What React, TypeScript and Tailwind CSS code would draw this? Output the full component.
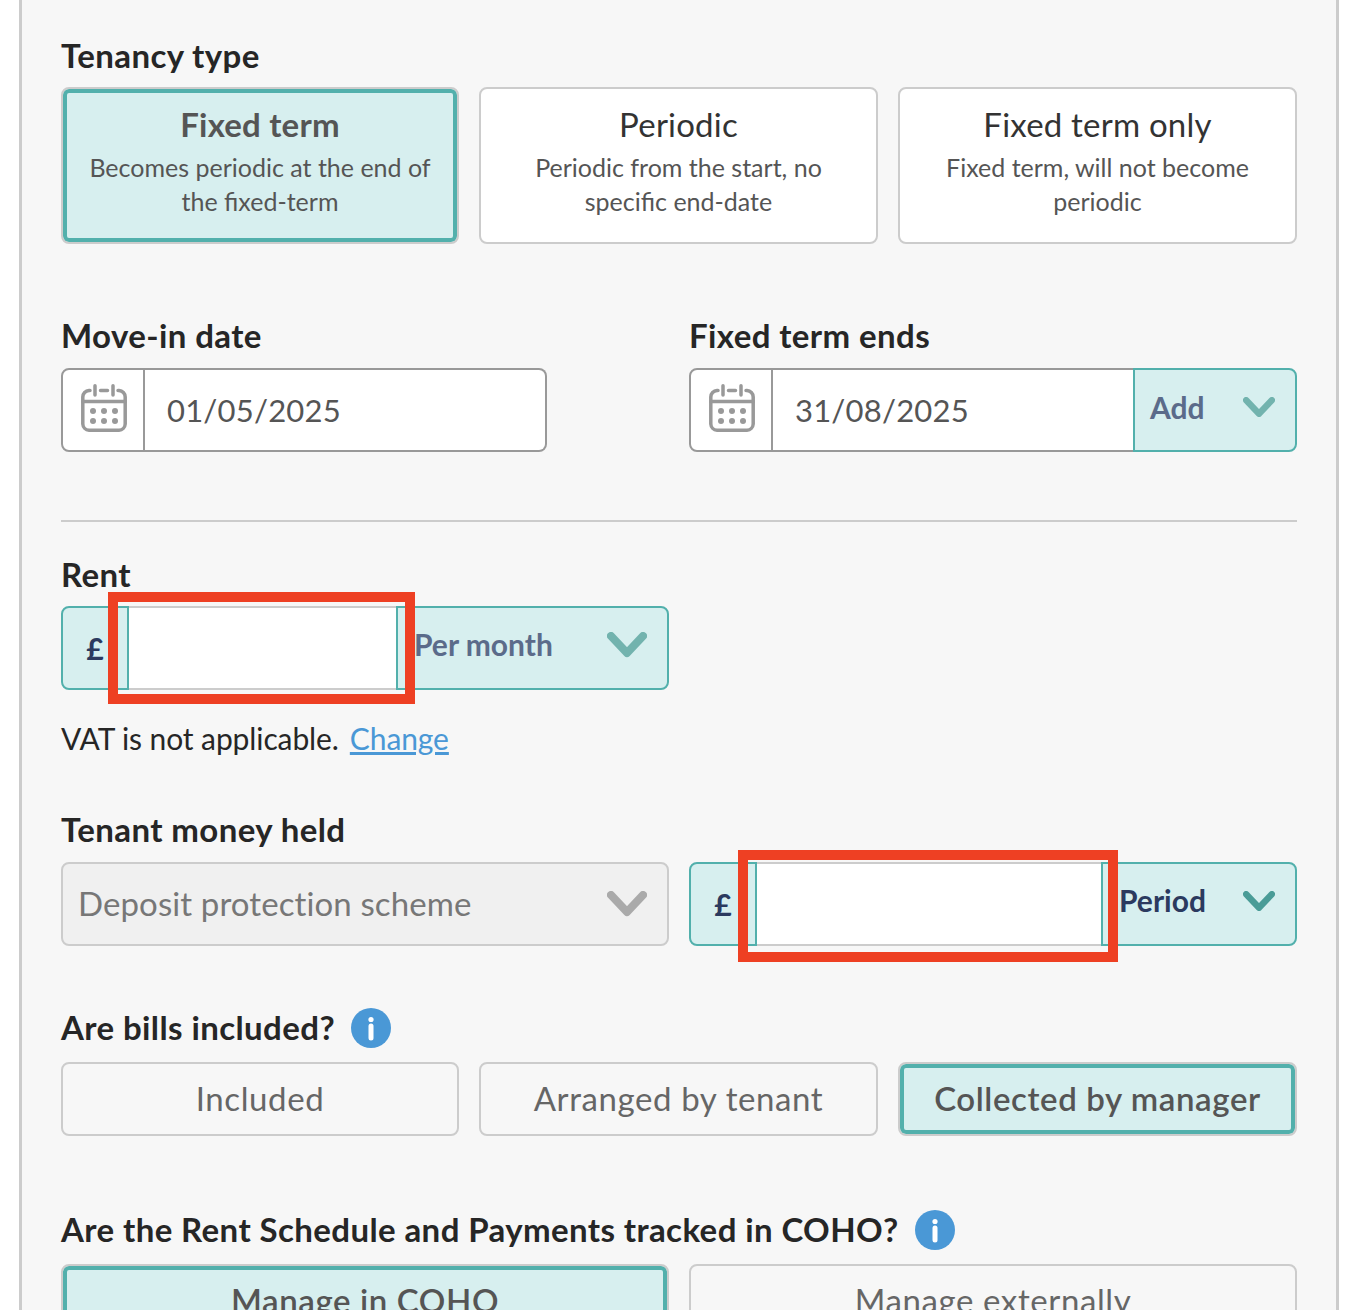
import { ReactNode } from "react";

const tenancyTypes = [
  { title: "Fixed term", des: ["Becomes periodic at the end of", "the fixed-term"], active: true },
  { title: "Periodic", des: ["Periodic from the start, no", "specific end-date"], active: false },
  { title: "Fixed term only", des: ["Fixed term, will not become", "periodic"], active: false },
];

const Label = ({ children, className }: { children: ReactNode; className: string }) => (
  <div className={`flex h-10 items-center pb-0.5 text-[33px] font-bold tracking-[0.4px] text-[#262626] ${className}`}>{children}</div>
);

const InfoIcon = ({ className }: { className: string }) => (
  <svg viewBox="0 0 40 40" className={`h-10 w-10 shrink-0 ${className}`}>
    <circle cx="20" cy="20" r="20" fill="#4a98d6" />
    <circle cx="20" cy="11.5" r="2.6" fill="#fff" />
    <path d="M20 18v12" stroke="#fff" strokeWidth="5" strokeLinecap="round" />
  </svg>
);

const Chevron = ({ color, width, className }: { color: string; width: number; className: string }) => (
  <svg viewBox="0 0 40 26" width={width} height={(width * 26) / 40} className={className}>
    <path d="M4 4l16 17L36 4" fill="none" stroke={color} strokeWidth="8" strokeLinecap="round" strokeLinejoin="round" />
  </svg>
);

const CalendarIcon = () => (
  <svg viewBox="0 0 46 48" className="mb-1 ml-0.5 h-12 w-[46px]" fill="none" stroke="#999" strokeWidth="3.5" strokeLinecap="round">
    <path d="M9 6.5H8A6.5 6.5 0 0 0 1.8 13v27A6.5 6.5 0 0 0 8 46.2h30a6.5 6.5 0 0 0 6.2-6.2V13A6.5 6.5 0 0 0 38 6.5h-1" />
    <path d="M14 1.8V11M32 1.8V11M19.5 6.5h7M1.8 17.5h42.4" />
    <g fill="#999" stroke="none">
      <circle cx="12" cy="27" r="3" />
      <circle cx="23" cy="27" r="3" />
      <circle cx="34" cy="27" r="3" />
      <circle cx="12" cy="37" r="3" />
      <circle cx="23" cy="37" r="3" />
      <circle cx="34" cy="37" r="3" />
    </g>
  </svg>
);

const DateField = ({ value, children, className }: { value: string; children?: ReactNode; className: string }) => (
  <div className={`flex h-[84px] ${className}`}>
    <div className="flex w-[84px] shrink-0 items-center justify-center rounded-l-lg border-2 border-[#999] bg-white">
      <CalendarIcon />
    </div>
    <div
      className={
        children
          ? "flex flex-1 items-center border-y-2 border-[#999] bg-white pl-[22px] text-[31px] tracking-[0.2px] text-[#555]"
          : "flex flex-1 items-center rounded-r-lg border-y-2 border-r-2 border-[#999] bg-white pl-[22px] text-[31px] tracking-[0.2px] text-[#555]"
      }
    >
      {value}
    </div>
    {children}
  </div>
);

const Toggle = ({ label, active }: { label: string; active?: boolean }) => (
  <div
    className={
      active
        ? "flex h-full items-center justify-center rounded-lg border-2 border-[#ccc] bg-[#d7efef] text-[33px] font-semibold tracking-[0.6px] text-[#555] shadow-[inset_0_0_0_4px_#52b0ac]"
        : "flex h-full items-center justify-center rounded-lg border-2 border-[#ccc] text-[33px] tracking-[0.6px] text-[#666]"
    }
  >
    {label}
  </div>
);

const MoneyField = ({ unit, unitColor, chevronColor, chevronWidth, inputWidth, className }: {
  unit: string;
  unitColor: string;
  chevronColor: string;
  chevronWidth: number;
  inputWidth: string;
  className: string;
}) => (
  <div className={`flex h-[84px] ${className}`}>
    <div className="flex w-[68px] shrink-0 items-center justify-center rounded-l-lg border-2 border-[#52b0ac] bg-[#d7efef] text-[30px] font-bold text-[#2b3a5f]">£</div>
    <div className={`shrink-0 border-y-2 border-[#ccc] bg-white ${inputWidth}`} />
    <div className={`flex flex-1 items-center justify-between rounded-r-lg border-2 border-[#52b0ac] bg-[#d7efef] pr-5 pl-4 text-[30px] font-bold ${unitColor}`}>
      <span className="pb-[7px]">{unit}</span>
      <Chevron color={chevronColor} width={chevronWidth} className="mb-[6px]" />
    </div>
  </div>
);

const App = () => {
  return (
    <div className="relative h-[1310px] overflow-hidden bg-white font-['Lato',sans-serif]">
      <div className="ml-[19px] h-full w-[1320px] border-x-[3px] border-[#ccc] bg-[#f7f7f7] px-[39px] pt-[37px]">
        <Label className="mb-[10px]">Tenancy type</Label>
        <div className="grid h-[157px] grid-cols-[398px_399px_399px] gap-5">
          {tenancyTypes.map((item) => (
            <div
              key={item.title}
              className={
                item.active
                  ? "flex flex-col items-center rounded-lg border-2 border-[#ccc] bg-[#d7efef] pt-[15px] text-[#555] shadow-[inset_0_0_0_4px_#52b0ac]"
                  : "flex flex-col items-center rounded-lg border-2 border-[#ccc] bg-white pt-[15px] text-[#333]"
              }
            >
              <p className={item.active ? "text-[33px] leading-10 font-bold tracking-[0.2px]" : "text-[33px] leading-10 tracking-[0.2px]"}>{item.title}</p>
              <div className="mt-[6px] text-[25px] leading-[34px] text-[#555]">
                {item.des.map((line) => (
                  <p key={line} className="text-center">{line}</p>
                ))}
              </div>
            </div>
          ))}
        </div>

        <div className="mt-[73px] grid grid-cols-2 gap-5">
          <div>
            <Label className="mb-[11px]">Move-in date</Label>
            <DateField value="01/05/2025" className="w-[486px]" />
          </div>
          <div>
            <Label className="mb-[11px]">Fixed term ends</Label>
            <DateField value="31/08/2025" className="">
              <div className="flex w-[164px] shrink-0 items-center justify-between rounded-r-lg border-2 border-[#52b0ac] bg-[#d7efef] pr-5 pl-[15px] text-[30px] font-bold text-[#5b6b8a]">
                <span className="pb-[6px]">Add</span>
                <Chevron color="#72b3ae" width={32} className="mb-[6px]" />
              </div>
            </DateField>
          </div>
        </div>

        <div className="mt-[68px] h-0.5 bg-[#ccc]" />

        <Label className="mt-[34px] mb-[10px]">Rent</Label>
        <MoneyField unit="Per month" unitColor="text-[#5b6b8a]" chevronColor="#72b3ae" chevronWidth={40} inputWidth="w-[267px]" className="w-[608px]" />

        <p className="mt-[28px] flex h-10 items-center text-[30px] tracking-[-0.1px] text-[#262626]">
          VAT is not applicable.
          <span className="ml-[11px] text-[#4a98d6] underline underline-offset-2">Change</span>
        </p>

        <Label className="mt-[53px] mb-[11px]">Tenant money held</Label>
        <div className="grid grid-cols-2 gap-5">
          <div className="flex h-[84px] items-center justify-between rounded-lg border-2 border-[#ccc] bg-[#f0f0f0] pr-5 pl-[15px] text-[33px] tracking-[0.1px] text-[#777]">
            Deposit protection scheme
            <Chevron color="#aaa" width={40} className="" />
          </div>
          <MoneyField unit="Period" unitColor="text-[#2b3a5f]" chevronColor="#4a9c97" chevronWidth={32} inputWidth="w-[344px]" className="" />
        </div>

        <Label className="mt-[63px] mb-[13px]">
          Are bills included?
          <InfoIcon className="ml-4" />
        </Label>
        <div className="grid h-[74px] grid-cols-[398px_399px_399px] gap-5">
          <Toggle label="Included" />
          <Toggle label="Arranged by tenant" />
          <Toggle label="Collected by manager" active />
        </div>

        <Label className="mt-[75px] mb-[13px]">
          Are the Rent Schedule and Payments tracked in COHO?
          <InfoIcon className="ml-4" />
        </Label>
        <div className="grid h-[74px] grid-cols-2 gap-5">
          <Toggle label="Manage in COHO" active />
          <Toggle label="Manage externally" />
        </div>
      </div>

      <div className="absolute top-[592px] left-[108px] h-[112px] w-[307px] border-[10px] border-[#ee4023]" />
      <div className="absolute top-[850px] left-[738px] h-[112px] w-[380px] border-[10px] border-[#ee4023]" />
    </div>
  );
};

export default App;
